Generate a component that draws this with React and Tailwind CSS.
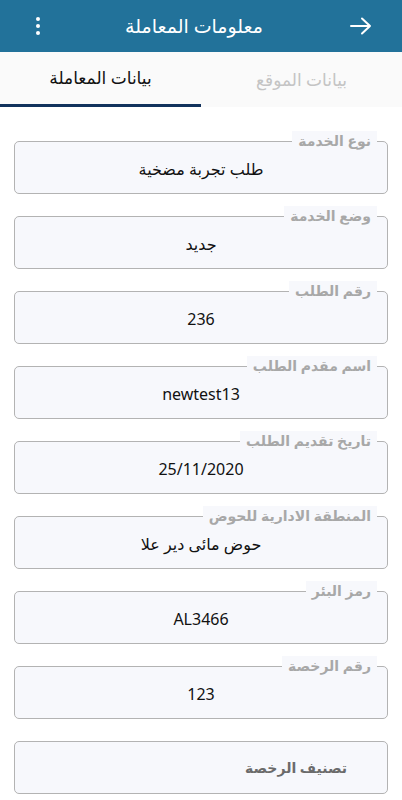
import React from "react";

const fields = [
  { label: "نوع الخدمة", value: "طلب تجربة مضخية" },
  { label: "وضع الخدمة", value: "جديد" },
  { label: "رقم الطلب", value: "236" },
  { label: "اسم مقدم الطلب", value: "newtest13" },
  { label: "تاريخ تقديم الطلب", value: "25/11/2020" },
  { label: "المنطقة الادارية للحوض", value: "حوض مائى دير علا" },
  { label: "رمز البئر", value: "AL3466" },
  { label: "رقم الرخصة", value: "123" },
];

const font = { fontFamily: '"Noto Sans", "DejaVu Sans", sans-serif' };

const Field = ({ label, value }) => (
  <div className="relative h-[53px] rounded-[5px] border-[1.5px] border-[#b3b3b3] bg-[#f7f8fc] flex items-center justify-center">
    <span className="absolute -top-[11px] right-[10px] px-[6px] leading-[20px] text-[14px] font-bold text-[#a8a8a8] bg-[#f7f8fc]">
      {label}
    </span>
    <span className="text-[16px] text-[#111] mt-[2px]">{value}</span>
  </div>
);

const App = () => {
  return (
    <div dir="rtl" className="w-full min-h-screen bg-white" style={font}>
      <div className="h-[52px] bg-[#22729a] flex items-center justify-between px-[30px] text-white">
        <svg width="22" height="18" viewBox="0 0 22 18" fill="none" stroke="white" strokeWidth="2" strokeLinecap="round" strokeLinejoin="round">
          <path d="M1 9h19M12 1.5 20 9l-8 7.5" />
        </svg>
        <h1 className="text-[19px] mr-[2px]">معلومات المعاملة</h1>
        <div className="flex flex-col gap-[3px] ml-[6px]">
          <span className="w-[4px] h-[4px] rounded-full bg-white" />
          <span className="w-[4px] h-[4px] rounded-full bg-white" />
          <span className="w-[4px] h-[4px] rounded-full bg-white" />
        </div>
      </div>
      <div className="h-[55px] bg-[#fafafa] grid grid-cols-2">
        <div className="flex items-center justify-center text-[17px] text-[#c4c4c4]">بيانات الموقع</div>
        <div className="flex items-center justify-center text-[17px] font-medium text-[#111] border-b-[3px] border-[#12325c]">
          بيانات المعاملة
        </div>
      </div>
      <div className="px-[14px] pt-[34px] pb-[8px] flex flex-col gap-[22px]">
        {fields.map((f) => (
          <Field key={f.label} {...f} />
        ))}
        <div className="h-[53px] rounded-[5px] border-[1.5px] border-[#b3b3b3] bg-[#f7f8fc] flex items-center pr-[40px]">
          <span className="text-[14px] font-bold text-[#6b6b6b]">تصنيف الرخصة</span>
        </div>
      </div>
    </div>
  );
};

export default App;
